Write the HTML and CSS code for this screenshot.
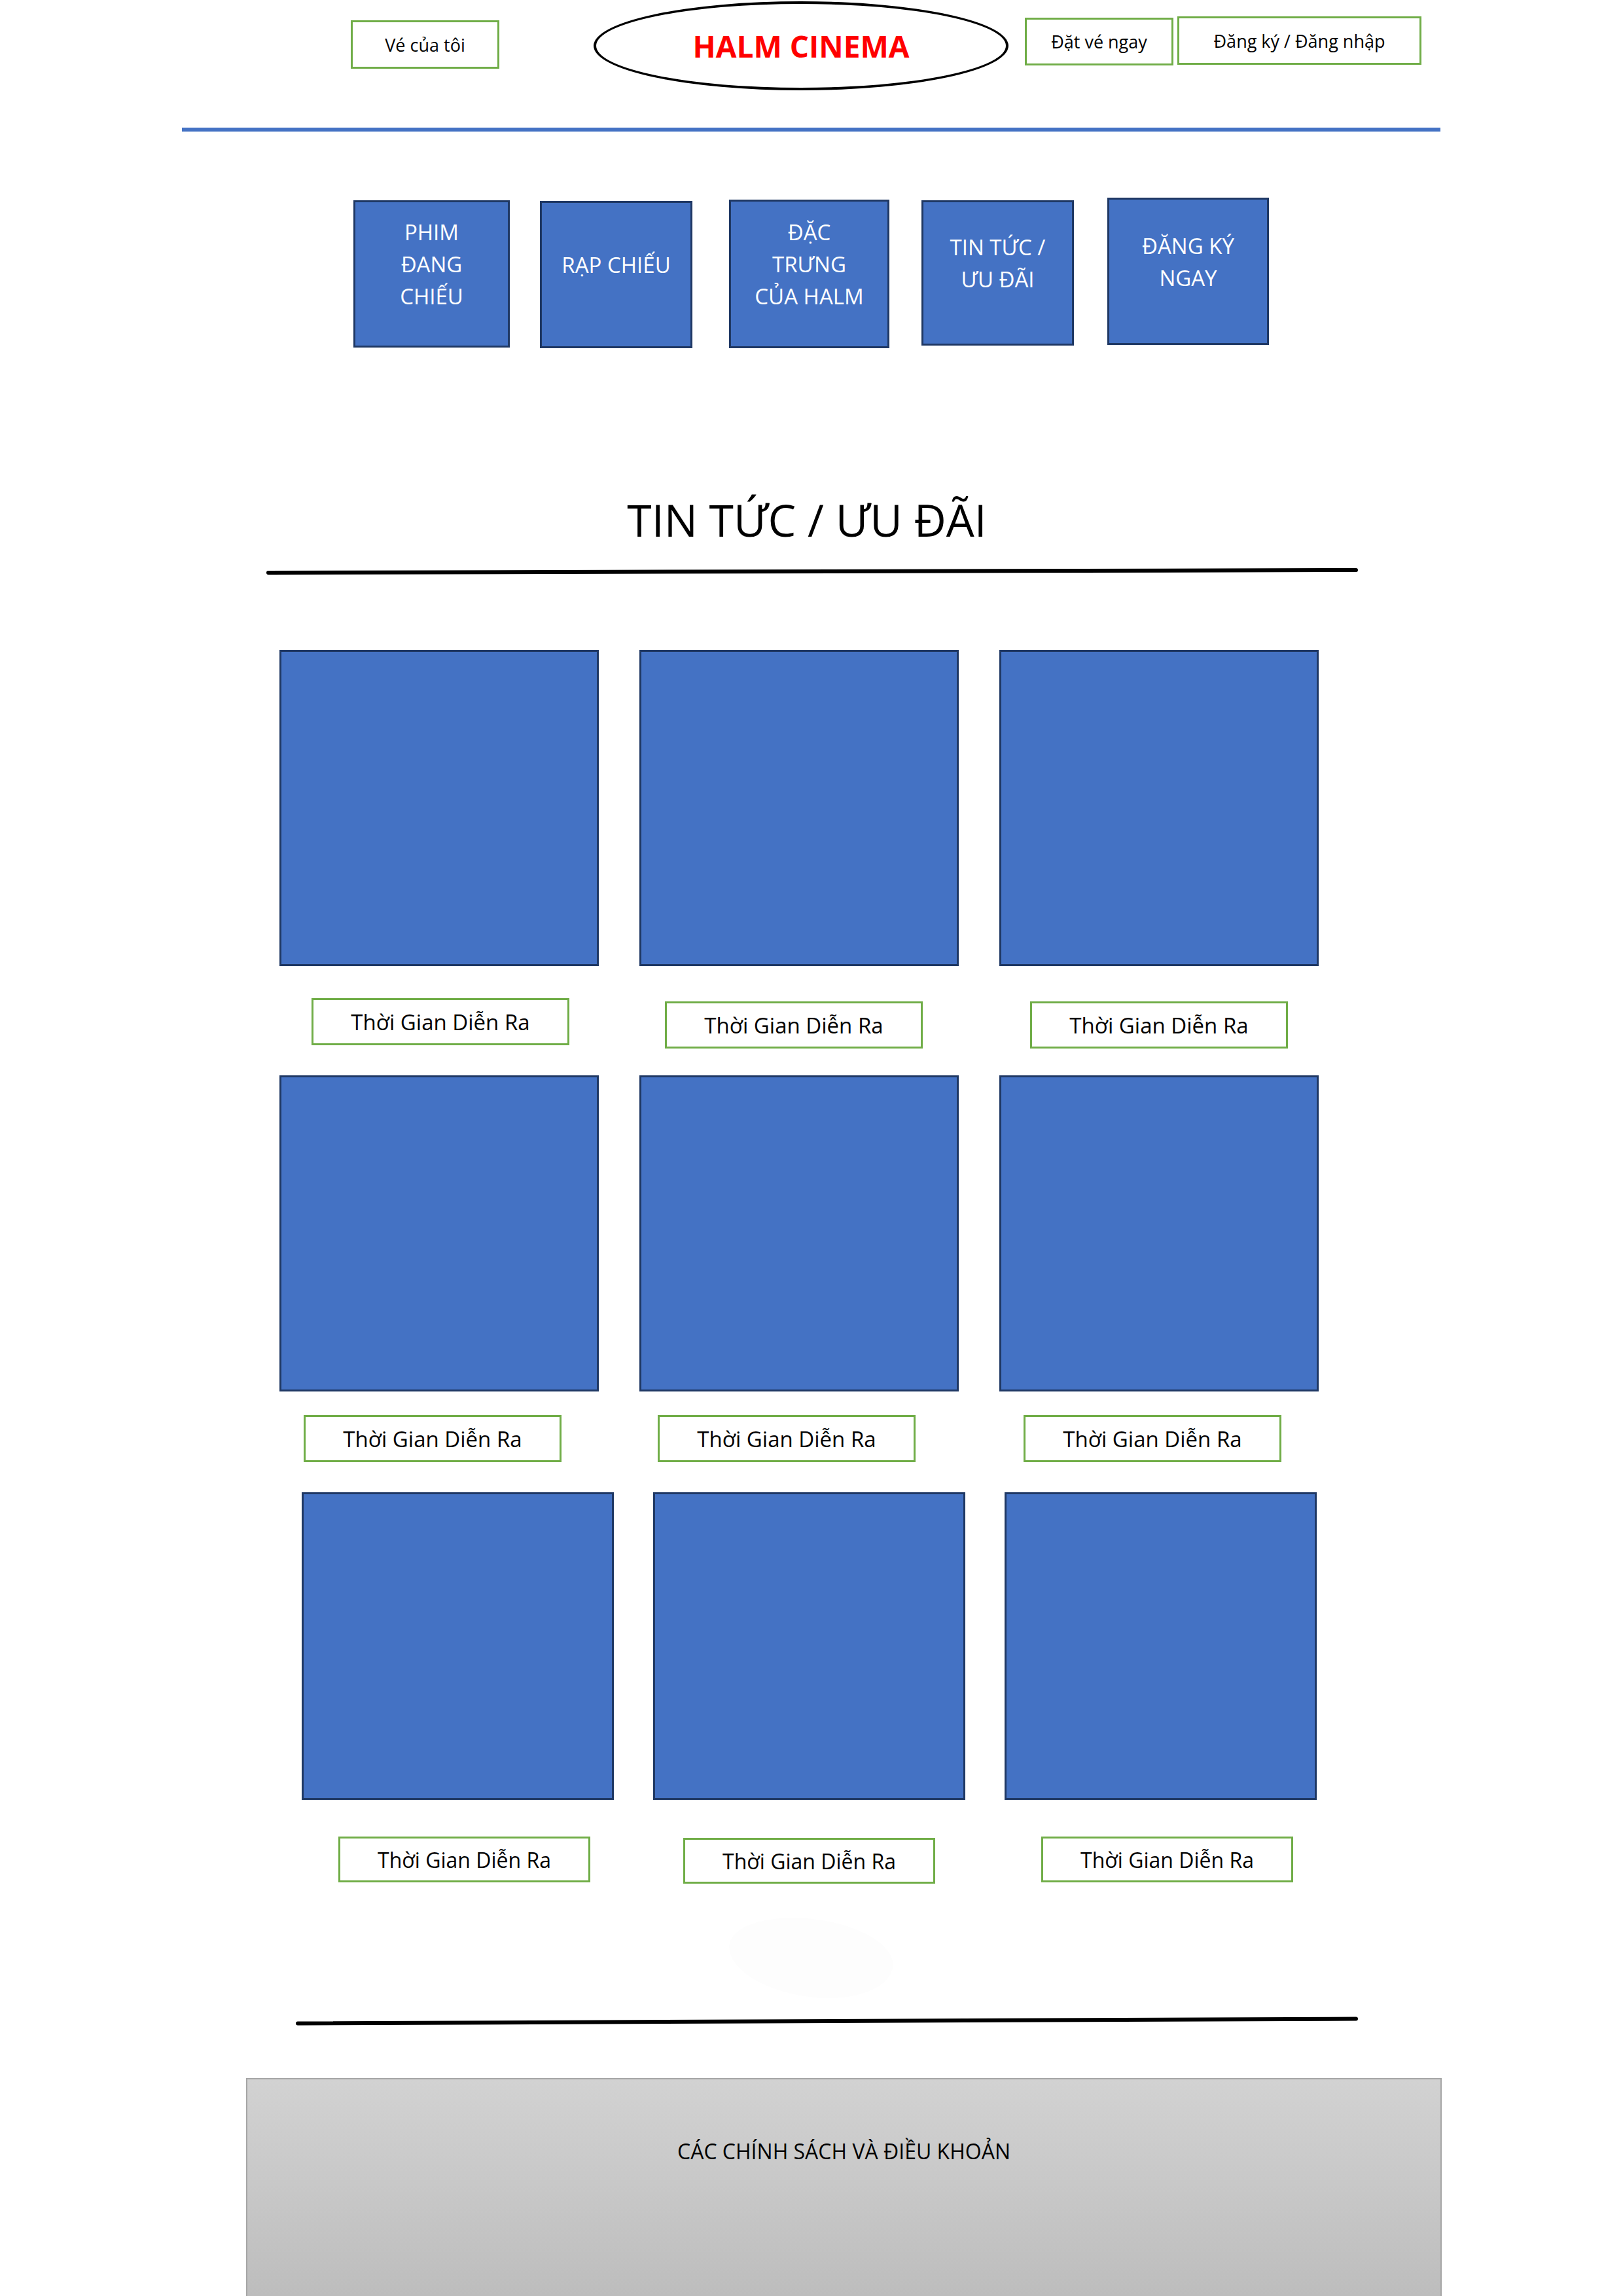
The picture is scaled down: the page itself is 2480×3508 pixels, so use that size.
FILE: index.html
```html
<!DOCTYPE html>
<html lang="vi">
<head>
<meta charset="utf-8">
<title>HALM CINEMA - Tin tức / Ưu đãi</title>
<link rel="stylesheet" href="styles.css">
</head>
<body>
<div class="page">
  <header class="topbar">
    <a class="tag tag-mine">Vé của tôi</a>
    <div class="logo"><span class="logo-text">HALM CINEMA</span></div>
    <a class="tag tag-book">Đặt vé ngay</a>
    <a class="tag tag-auth">Đăng ký / Đăng nhập</a>
  </header>
  <div class="rule-blue"></div>

  <nav class="nav">
    <a class="nav-item nav-1">PHIM<br>ĐANG<br>CHIẾU</a>
    <a class="nav-item nav-2">RẠP CHIẾU</a>
    <a class="nav-item nav-3">ĐẶC<br>TRƯNG<br>CỦA HALM</a>
    <a class="nav-item nav-4">TIN TỨC /<br>ƯU ĐÃI</a>
    <a class="nav-item nav-5">ĐĂNG KÝ<br>NGAY</a>
  </nav>

  <h1 class="title">TIN TỨC / ƯU ĐÃI</h1>
  <div class="rule-black rule-top"></div>

  <section class="cards">
    <div class="card-row row-1">
      <div class="card"><div class="thumb"></div><div class="when when-a">Thời Gian Diễn Ra</div></div>
      <div class="card"><div class="thumb"></div><div class="when when-b">Thời Gian Diễn Ra</div></div>
      <div class="card"><div class="thumb"></div><div class="when when-c">Thời Gian Diễn Ra</div></div>
    </div>
    <div class="card-row row-2">
      <div class="card"><div class="thumb"></div><div class="when when-d">Thời Gian Diễn Ra</div></div>
      <div class="card"><div class="thumb"></div><div class="when when-e">Thời Gian Diễn Ra</div></div>
      <div class="card"><div class="thumb"></div><div class="when when-d">Thời Gian Diễn Ra</div></div>
    </div>
    <div class="card-row row-3">
      <div class="card"><div class="thumb"></div><div class="when when-f">Thời Gian Diễn Ra</div></div>
      <div class="card"><div class="thumb"></div><div class="when">Thời Gian Diễn Ra</div></div>
      <div class="card"><div class="thumb"></div><div class="when when-f">Thời Gian Diễn Ra</div></div>
    </div>
  </section>

  <div class="blob"></div>
  <div class="rule-black rule-bottom"></div>

  <footer class="footer">CÁC CHÍNH SÁCH VÀ ĐIỀU KHOẢN</footer>
</div>
</body>
</html>
```
FILE: styles.css
```css
html, body {
  margin: 0;
  padding: 0;
  background: #ffffff;
}

.page {
  width: 2480px;
  height: 3508px;
  overflow: hidden;
  font-family: "Open Sans", "Noto Sans", sans-serif;
  color: #000;
}

/* ---------- header ---------- */
.topbar {
  display: flex;
  align-items: flex-start;
  height: 140px;
  padding-left: 536px;
}

.tag {
  box-sizing: border-box;
  display: flex;
  align-items: center;
  justify-content: center;
  border: 3px solid #70ad47;
  font-size: 27px;
  color: #000;
  text-decoration: none;
  white-space: nowrap;
}

.tag-mine {
  width: 227px;
  height: 74px;
  margin-top: 31px;
}

.tag-book {
  width: 227px;
  height: 73px;
  margin-top: 27px;
  margin-left: 25px;
}

.tag-auth {
  width: 373px;
  height: 74px;
  margin-top: 25px;
  margin-left: 6px;
}

.logo {
  box-sizing: border-box;
  width: 634px;
  height: 136px;
  margin-top: 2px;
  margin-left: 144px;
  border: 4px solid #000;
  border-radius: 50%;
  display: flex;
  align-items: center;
  justify-content: center;
}

.logo-text {
  color: #ff0000;
  font-weight: 700;
  font-size: 46px;
}

.rule-blue {
  margin-top: 55px;
  margin-left: 278px;
  width: 1923px;
  height: 6px;
  background: #4472c4;
}

/* ---------- nav ---------- */
.nav {
  display: flex;
  align-items: flex-start;
  margin-top: 101px;
  padding-left: 540px;
}

.nav-item {
  box-sizing: border-box;
  display: flex;
  align-items: center;
  justify-content: center;
  padding-bottom: 30px;
  background: #4472c4;
  border: 3px solid #1f3864;
  color: #fff;
  font-size: 33px;
  line-height: 49px;
  text-align: center;
  text-decoration: none;
}

.nav-1 { width: 239px; height: 225px; margin-top: 4px; }
.nav-2 { width: 233px; height: 225px; margin-top: 5px; margin-left: 46px; }
.nav-3 { width: 245px; height: 227px; margin-top: 3px; margin-left: 56px; }
.nav-4 { width: 233px; height: 222px; margin-top: 4px; margin-left: 49px; }
.nav-5 { width: 247px; height: 225px; margin-top: 0; margin-left: 51px; }

/* ---------- title ---------- */
.title {
  margin: 222px 0 0 0;
  padding-right: 14px;
  font-size: 68px;
  font-weight: 400;
  line-height: 80px;
  text-align: center;
}

.rule-black {
  height: 6px;
  background: #000;
  border-radius: 3px;
}

.rule-top {
  margin-top: 36px;
  margin-left: 407px;
  width: 1668px;
  transform: rotate(-0.14deg);
}

/* ---------- cards ---------- */
.cards {
  margin-top: 117px;
}

.card-row {
  display: flex;
  gap: 62px;
  padding-left: 427px;
}

.card {
  display: flex;
  flex-direction: column;
  align-items: center;
  width: 488px;
}

.thumb {
  box-sizing: border-box;
  width: 100%;
  height: 483px;
  background: #4472c4;
  border: 3px solid #1f3864;
}

.when {
  box-sizing: border-box;
  display: flex;
  align-items: center;
  justify-content: center;
  width: 394px;
  height: 72px;
  margin-top: 52px;
  border: 3px solid #70ad47;
  font-size: 33px;
  white-space: nowrap;
}

.when-a { margin-top: 49px; margin-left: 4px; }
.when-b { margin-top: 54px; margin-right: 16px; }
.when-c { margin-top: 54px; }

.row-2 { margin-top: 41px; }
.row-2 .when { margin-top: 32px; margin-right: 20px; }
.row-2 .when-e { margin-top: 36px; margin-right: 38px; }
.row-2 .when-d:last-child { margin-top: 36px; }

.row-3 {
  margin-top: 46px;
  padding-left: 461px;
  gap: 60px;
}

.row-3 .card { width: 477px; }
.row-3 .thumb { height: 470px; }
.row-3 .when {
  width: 385px;
  height: 70px;
  margin-top: 58px;
  font-size: 32px;
}
.row-3 .when-f { margin-left: 20px; margin-top: 56px; }

/* ---------- bottom ---------- */
.blob {
  margin-top: 54px;
  margin-left: 1113px;
  width: 252px;
  height: 119px;
  border-radius: 48% 52% 46% 54% / 44% 50% 50% 56%;
  background: #fdfdfd;
  transform: rotate(6deg);
}

.rule-bottom {
  margin-top: 34px;
  margin-left: 452px;
  width: 1623px;
  transform: rotate(-0.25deg);
}

.footer {
  box-sizing: border-box;
  margin-top: 84px;
  margin-left: 376px;
  width: 1827px;
  height: 337px;
  padding-top: 88px;
  border: 2px solid #a6a6a6;
  background: linear-gradient(#d2d2d2, #bdbdbd);
  font-size: 32px;
  line-height: 44px;
  text-align: center;
}
```
